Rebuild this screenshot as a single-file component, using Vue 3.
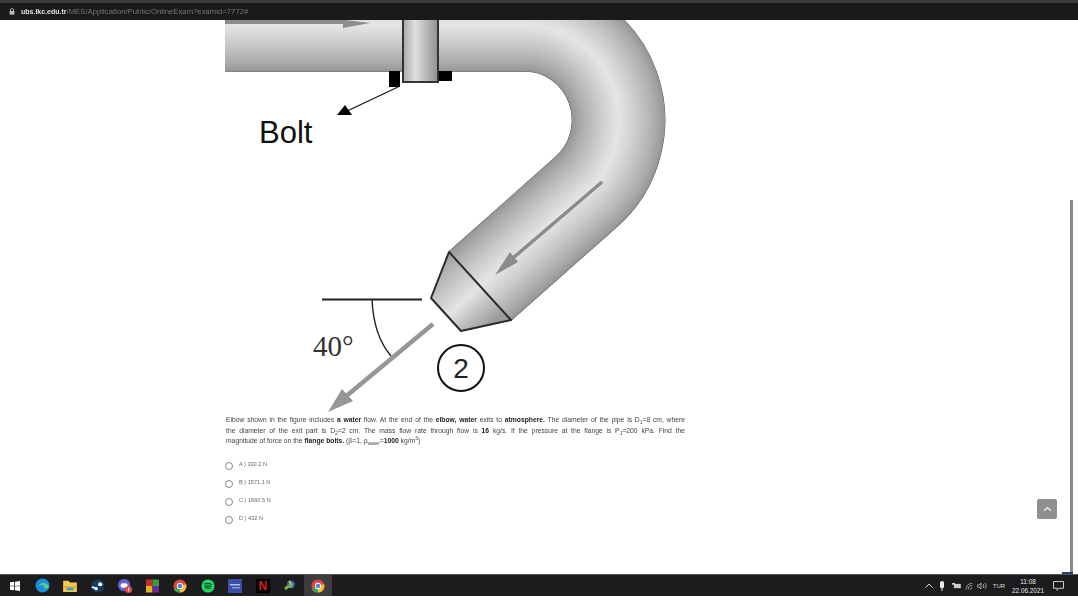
<script setup>
const N = 24
const mix = (a, b, t) => Math.round(a + (b - a) * t)
const layers = Array.from({ length: N }, (_, i) => {
  const t = i / (N - 1)
  const v = mix(150, 230, Math.pow(t, 0.8))
  return { width: 92 * (1 - t) + 1, color: `rgb(${v},${v},${v})` }
})
const options = ['A ) 330.2 N', 'B ) 1571.1 N', 'C ) 1660.5 N', 'D ) 432 N']
const pipe = 'M225,25 L525,25 A93,95 0 0 1 585,193 L480,286'
</script>

<template>
  <div class="page">
    <header class="browser">
      <div class="tabstrip"></div>
      <div class="address">
        <svg class="lock" viewBox="0 0 6 7" width="6" height="7"><path d="M1.5 3V2a1.5 1.5 0 0 1 3 0v1" fill="none" stroke="#bbb" stroke-width=".8"/><rect x=".6" y="3" width="4.8" height="3.6" fill="#bbb"/></svg>
        <span class="url"><span class="host">ubs.ikc.edu.tr</span>/MES/Application/Public/OnlineExam?examid=7772#</span>
      </div>
    </header>

    <main class="main">
      <article class="exam">
        <svg class="figure" viewBox="225 20 460 392" width="460" height="392">
          <defs>
            <linearGradient id="stem" x1="0" x2="1" y1="0" y2="0">
              <stop offset="0" stop-color="#a8a8a8"/>
              <stop offset=".35" stop-color="#e0e0e0"/>
              <stop offset="1" stop-color="#8f8f8f"/>
            </linearGradient>
            <linearGradient id="nozzle" gradientUnits="userSpaceOnUse" x1="441" y1="262" x2="495" y2="321">
              <stop offset="0" stop-color="#a2a2a2"/>
              <stop offset=".55" stop-color="#e4e4e4"/>
              <stop offset="1" stop-color="#9a9a9a"/>
            </linearGradient>
          </defs>

          <path :d="pipe" fill="none" stroke="#444" stroke-width="93.6"/>
          <path v-for="(l, i) in layers" :key="i" :d="pipe" fill="none" :stroke="l.color" :stroke-width="l.width"/>

          <polygon points="449,252 431,298 461,331 511,320" fill="url(#nozzle)" stroke="#2b2b2b" stroke-width="2" stroke-linejoin="round"/>
          <path d="M225,15H345V20L370,23L343,28V24H225Z" fill="#8c8c8c"/>

          <rect x="389" y="71" width="11" height="16" fill="#000"/>
          <rect x="437" y="71" width="15" height="10" fill="#000"/>
          <rect x="403" y="10" width="35" height="72" fill="url(#stem)" stroke="#333" stroke-width="2"/>

          <path d="M398,87L345,112" stroke="#111" stroke-width="1.2"/>
          <polygon points="337,115 352,115 345,105" fill="#000"/>
          <text x="259" y="143" class="bolt">Bolt</text>

          <path d="M602,182L506,264" stroke="#8c8c8c" stroke-width="3.5"/>
          <polygon points="495,275 510,252 518,262" fill="#8c8c8c"/>

          <path d="M322,299.5H422" stroke="#222" stroke-width="2"/>
          <path d="M372,299.5C373,322 379,342 391,356" fill="none" stroke="#222" stroke-width="1.4"/>
          <path d="M433,324L344,398" stroke="#969696" stroke-width="4.5"/>
          <polygon points="328,412 342,389 353,401" fill="#969696"/>

          <text x="313" y="356" class="angle">40°</text>
          <circle cx="461" cy="368" r="23" fill="#fff" stroke="#111" stroke-width="2"/>
          <text x="461" y="378" class="num">2</text>
        </svg>

        <div class="question">
          <p class="line fit">Elbow shown in the figure includes <b>a water</b> flow. At the end of the <b>elbow, water</b> exits to <b>atmosphere.</b> The diameter of the pipe is D<sub>1</sub>=8 cm, where</p>
          <p class="line fit">the diameter of the exit part is D<sub>2</sub>=2 cm. The mass flow rate through flow is <b>16</b> kg/s. If the pressure at the flange is P<sub>1</sub>=200 kPa. Find the</p>
          <p class="line">magnitude of force on the <b>flange bolts.</b> (β=1, ρ<sub>water</sub>=<b>1000</b> kg/m<sup>3</sup>)</p>
        </div>

        <ul class="options">
          <li v-for="o in options" :key="o" class="option">
            <span class="radio"></span>
            <span class="label">{{ o }}</span>
          </li>
        </ul>
      </article>

      <button class="totop" aria-label="Back to top">
        <svg viewBox="0 0 10 6" width="9" height="6"><path d="M1 5L5 1.5L9 5" fill="none" stroke="#e6e6e6" stroke-width="1.5"/></svg>
      </button>
      <div class="scrolltrack"><div class="thumb"></div></div>
      <div class="scrollend"></div>
    </main>

    <footer class="taskbar">
      <div class="apps">
        <div class="slot"><svg viewBox="0 0 12 12" width="10" height="10"><path d="M0 1.6L5 1V5.6H0ZM6 .8L12 0V5.6H6ZM0 6.4H5V11L0 10.4ZM6 6.4H12V12L6 11.2Z" fill="#fff"/></svg></div>
        <div class="slot"><svg viewBox="0 0 16 16" width="15" height="15"><circle cx="8" cy="8" r="7.5" fill="#1b8fd6"/><path d="M4 9C5 4.5 12 4 14.5 8.5 15 11 12 11.5 9 11 11 9 9 7 7 7.5 5 8 4 9 4 9Z" fill="#57d08a"/></svg></div>
        <div class="slot"><svg viewBox="0 0 16 14" width="14" height="12"><path d="M0 1H6L8 3H16V14H0Z" fill="#f5c94c"/><rect x="0" y="7" width="16" height="2" fill="#e7ad2c"/><rect x="4" y="9" width="8" height="3" fill="#3aa0dd"/></svg></div>
        <div class="slot"><svg viewBox="0 0 16 16" width="14" height="14"><circle cx="8" cy="8" r="7.5" fill="#163a63"/><circle cx="10.5" cy="6" r="2.4" fill="#fff"/><path d="M1 9L6 11" stroke="#fff" stroke-width="2.4"/><circle cx="6" cy="11" r="1.8" fill="#fff"/></svg></div>
        <div class="slot"><svg viewBox="0 0 18 18" width="16" height="16"><circle cx="8" cy="8" r="7" fill="#5c63d8"/><rect x="4" y="6" width="8" height="5" rx="2.5" fill="#fff"/><circle cx="13" cy="13" r="4" fill="#e8484a"/><rect x="12.5" y="11" width="1.2" height="4" fill="#fff"/></svg></div>
        <div class="slot"><svg viewBox="0 0 14 14" width="13" height="14"><rect width="7" height="7" fill="#c62b26"/><rect x="7" width="7" height="7" fill="#3f9a3a"/><rect y="7" width="7" height="7" fill="#e0b21c"/><rect x="7" y="7" width="7" height="7" fill="#6a2c91"/></svg></div>
        <div class="slot"><svg viewBox="0 0 16 16" width="14" height="14"><circle cx="8" cy="8" r="7.5" fill="#e0453a"/><path d="M8 8L1 12A7.5 7.5 0 0 0 8 15.5Z" fill="#3aa757"/><path d="M8 8L15 6A7.5 7.5 0 0 1 8 15.5Z" fill="#f6c026"/><circle cx="8" cy="8" r="3.6" fill="#fff"/><circle cx="8" cy="8" r="2.7" fill="#4a88e8"/></svg></div>
        <div class="slot"><svg viewBox="0 0 16 16" width="14" height="14"><circle cx="8" cy="8" r="7.5" fill="#1ed760"/><path d="M3.5 5.8C7 4.8 10 5 12.7 6.4M4 8.2C7 7.4 9.6 7.6 12 8.8M4.5 10.4C7 9.8 9 10 11 11" fill="none" stroke="#123" stroke-width="1.2"/></svg></div>
        <div class="slot"><svg viewBox="0 0 14 14" width="14" height="14"><rect width="14" height="14" fill="#3a4fa8"/><rect x="2" y="5" width="10" height="1.5" fill="#a9c4ec"/><rect x="4" y="8" width="8" height="1.5" fill="#7f9fdc"/></svg></div>
        <div class="slot"><span class="netflix">N</span></div>
        <div class="slot"><svg viewBox="0 0 16 14" width="14" height="12"><circle cx="9" cy="5" r="4.5" fill="#2f6fc0"/><path d="M1 10C3 6 7 5 10 6L12 9C8 8 5 9 4 12Z" fill="#6cb33f"/><path d="M7 1L10 6" stroke="#f0c030" stroke-width="2"/></svg></div>
        <div class="slot active"><svg viewBox="0 0 16 16" width="14" height="14"><circle cx="8" cy="8" r="7.5" fill="#e0453a"/><path d="M8 8L1 12A7.5 7.5 0 0 0 8 15.5Z" fill="#3aa757"/><path d="M8 8L15 6A7.5 7.5 0 0 1 8 15.5Z" fill="#f6c026"/><circle cx="8" cy="8" r="3.6" fill="#fff"/><circle cx="8" cy="8" r="2.7" fill="#4a88e8"/></svg></div>
      </div>
      <div class="tray">
        <svg viewBox="0 0 8 5" width="8" height="5"><path d="M.5 4.5L4 1L7.5 4.5" fill="none" stroke="#ddd"/></svg>
        <svg viewBox="0 0 6 10" width="6" height="10"><rect x="1" width="4" height="7.5" rx="2" fill="#eee"/><rect x="2.5" y="7.5" width="1" height="2.5" fill="#eee"/></svg>
        <svg viewBox="0 0 10 7" width="9" height="6"><rect x="2" y="1" width="8" height="5" fill="#ccc"/><rect width="3" height="2" fill="#eee"/></svg>
        <svg viewBox="0 0 10 8" width="9" height="8"><path d="M1 8A7 7 0 0 1 8 1M3.5 8A4.5 4.5 0 0 1 8 3.5M6 8A2 2 0 0 1 8 6" fill="none" stroke="#aaa"/></svg>
        <svg viewBox="0 0 10 8" width="10" height="8"><path d="M0 3H2L4 1V7L2 5H0Z" fill="none" stroke="#ccc" stroke-width=".8"/><path d="M6 2C7 3 7 5 6 6M8 1C9.5 3 9.5 5 8 7" fill="none" stroke="#ccc" stroke-width=".8"/></svg>
        <span class="lang">TUR</span>
        <span class="clock"><span>11:08</span><span>22.06.2021</span></span>
        <svg viewBox="0 0 12 11" width="11" height="10"><path d="M.5.5H11.5V8H6.5L4.5 10.2V8H.5Z" fill="none" stroke="#ddd"/></svg>
      </div>
    </footer>
    <div class="under"></div>
  </div>
</template>

<style scoped>
.page {
  width: 1078px;
  height: 602px;
  display: flex;
  flex-direction: column;
  overflow: hidden;
  background: #fff;
  font-family: "Liberation Sans", Arial, sans-serif;
}
.browser { flex: none; background: #1a1a1a; }
.tabstrip { height: 3px; background: #3a3a3a; }
.address {
  height: 17px;
  padding-left: 9px;
  display: flex;
  align-items: center;
  gap: 6px;
}
.lock { flex: none; }
.url {
  font-size: 7.65px;
  color: #777;
  letter-spacing: .05px;
  filter: blur(.25px);
}
.host { color: #e2e2e2; font-weight: 700; font-size: 7px; letter-spacing: 0; }
.main {
  flex: 1;
  min-height: 0;
  position: relative;
  display: flex;
  overflow: hidden;
}
.exam {
  flex: 1;
  padding-left: 225px;
}
.figure { display: block; }
.bolt {
  font-family: "Liberation Sans", Arial, sans-serif;
  font-size: 31px;
  fill: #111;
}
.angle {
  font-family: "Liberation Serif", "Times New Roman", serif;
  font-size: 29px;
  fill: #333;
}
.num {
  font-family: "Liberation Sans", Arial, sans-serif;
  font-size: 28px;
  fill: #222;
  text-anchor: middle;
}
.question {
  width: 459px;
  margin: 3px 0 0 1px;
  font-size: 6.75px;
  color: #444;
  filter: blur(.25px);
}
.line {
  margin: 0;
  height: 10.5px;
  line-height: 10.5px;
  white-space: normal;
}
.fit {
  text-align: justify;
  text-align-last: justify;
}
.question b { color: #222; }
.question sub, .question sup { font-size: 5px; line-height: 0; }
.options {
  list-style: none;
  margin: 8px 0 0;
  padding: 0;
}
.option {
  height: 18px;
  display: flex;
  align-items: center;
}
.radio {
  width: 6px;
  height: 6px;
  border: 1px solid #888;
  border-radius: 50%;
  background: #fff;
  margin-top: 5px;
}
.label {
  margin-left: 6px;
  font-size: 5.6px;
  color: #666;
  filter: blur(.2px);
}
.totop {
  position: absolute;
  left: 1037px;
  top: 479px;
  width: 20px;
  height: 20px;
  padding: 0;
  border: none;
  border-radius: 2px;
  background: #8f8f8f;
  display: flex;
  align-items: center;
  justify-content: center;
}
.scrolltrack {
  flex: none;
  width: 3px;
  margin-right: 5px;
  padding-top: 180px;
  display: flex;
}
.thumb { flex: 1; background: #8a8a8a; }
.scrollend {
  position: absolute;
  right: 5px;
  bottom: 0;
  width: 11px;
  height: 2px;
  background: #1f3f77;
}
.taskbar {
  flex: none;
  height: 21px;
  background: #1c1c1e;
  border-top: 1px solid #555;
  display: flex;
  justify-content: space-between;
  align-items: stretch;
}
.apps { display: flex; padding-left: 1.5px; }
.slot {
  width: 27.5px;
  display: flex;
  align-items: center;
  justify-content: center;
}
.active { background: #3c3c3e; }
.netflix {
  width: 14px;
  height: 14px;
  background: #000;
  color: #d81f26;
  font-size: 12px;
  font-weight: 700;
  line-height: 14px;
  text-align: center;
}
.tray {
  display: grid;
  grid-template-columns: 13px 14px 14px 13px 12px 22px 36px 24px;
  justify-items: center;
  align-items: center;
  padding-right: 8px;
}
.lang { font-size: 6px; color: #ddd; }
.clock {
  display: flex;
  flex-direction: column;
  align-items: center;
  font-size: 6.4px;
  line-height: 9px;
  color: #e4e4e4;
}
.under { flex: none; height: 6px; background: #fff; }
</style>

<style>
html, body { margin: 0; background: #fff; overflow: hidden; }
</style>
